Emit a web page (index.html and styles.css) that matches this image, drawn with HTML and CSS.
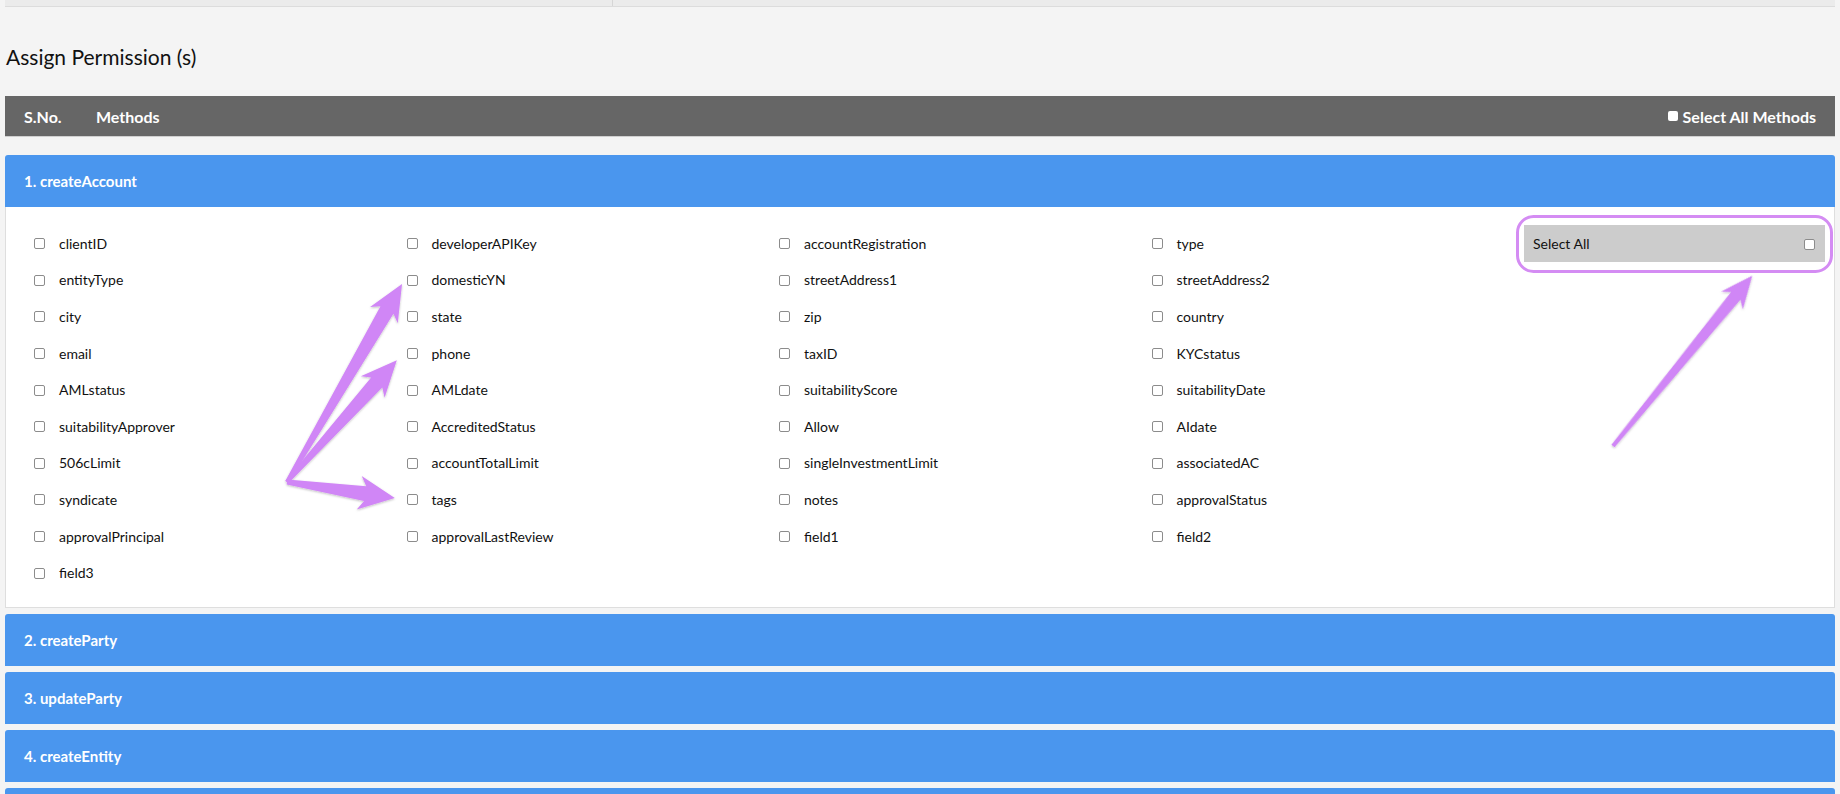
FILE: index.html
```html
<!DOCTYPE html>
<html lang="en">
<head>
    <meta charset="UTF-8">
    <title>Assign Permission (s)</title>
    <link rel="stylesheet" href="styles.css">
</head>
<body>
    <div class="page">
        <div class="top-strip">
            <div class="strip-cell first"></div>
            <div class="strip-cell"></div>
        </div>

        <h2 class="title">Assign Permission (s)</h2>

        <div class="methods-head">
            <span class="sno">S.No.</span>
            <span class="mname">Methods</span>
            <label class="all-methods"><input type="checkbox" class="sq"> Select All Methods</label>
        </div>

        <div class="method">
            <div class="method-bar">1. createAccount</div>
            <div class="method-body">
                <div class="fields">
                    <label class="field"><input type="checkbox">clientID</label>
                    <label class="field"><input type="checkbox">developerAPIKey</label>
                    <label class="field"><input type="checkbox">accountRegistration</label>
                    <label class="field"><input type="checkbox">type</label>
                    <label class="field"><input type="checkbox">entityType</label>
                    <label class="field"><input type="checkbox">domesticYN</label>
                    <label class="field"><input type="checkbox">streetAddress1</label>
                    <label class="field"><input type="checkbox">streetAddress2</label>
                    <label class="field"><input type="checkbox">city</label>
                    <label class="field"><input type="checkbox">state</label>
                    <label class="field"><input type="checkbox">zip</label>
                    <label class="field"><input type="checkbox">country</label>
                    <label class="field"><input type="checkbox">email</label>
                    <label class="field"><input type="checkbox">phone</label>
                    <label class="field"><input type="checkbox">taxID</label>
                    <label class="field"><input type="checkbox">KYCstatus</label>
                    <label class="field"><input type="checkbox">AMLstatus</label>
                    <label class="field"><input type="checkbox">AMLdate</label>
                    <label class="field"><input type="checkbox">suitabilityScore</label>
                    <label class="field"><input type="checkbox">suitabilityDate</label>
                    <label class="field"><input type="checkbox">suitabilityApprover</label>
                    <label class="field"><input type="checkbox">AccreditedStatus</label>
                    <label class="field"><input type="checkbox">Allow</label>
                    <label class="field"><input type="checkbox">AIdate</label>
                    <label class="field"><input type="checkbox">506cLimit</label>
                    <label class="field"><input type="checkbox">accountTotalLimit</label>
                    <label class="field"><input type="checkbox">singleInvestmentLimit</label>
                    <label class="field"><input type="checkbox">associatedAC</label>
                    <label class="field"><input type="checkbox">syndicate</label>
                    <label class="field"><input type="checkbox">tags</label>
                    <label class="field"><input type="checkbox">notes</label>
                    <label class="field"><input type="checkbox">approvalStatus</label>
                    <label class="field"><input type="checkbox">approvalPrincipal</label>
                    <label class="field"><input type="checkbox">approvalLastReview</label>
                    <label class="field"><input type="checkbox">field1</label>
                    <label class="field"><input type="checkbox">field2</label>
                    <label class="field"><input type="checkbox">field3</label>
                </div>
                <label class="select-all">Select All <input type="checkbox"></label>
            </div>
        </div>

        <div class="method"><div class="method-bar">2. createParty</div></div>
        <div class="method"><div class="method-bar">3. updateParty</div></div>
        <div class="method"><div class="method-bar">4. createEntity</div></div>
        <div class="method"><div class="method-bar"></div></div>
    </div>

    <!-- annotation layer -->
    <svg class="notes" width="1840" height="794" viewBox="0 0 1840 794">
        <defs>
            <filter id="shadow" x="-20%" y="-20%" width="140%" height="140%">
                <feDropShadow dx="0" dy="1" stdDeviation="1.2" flood-color="#000" flood-opacity="0.25"/>
            </filter>
        </defs>
        <rect x="1517.5" y="216.5" width="314" height="55" rx="16" class="ring"/>
        <g class="arrow" filter="url(#shadow)">
            <polygon transform="translate(287,482) rotate(-59.85)" points="0,-2 199,-7.5 193,-16 229,0 193,16 199,7.5 0,2"/>
            <polygon transform="translate(287,482) rotate(-47.96)" points="0,-2 134,-7.5 128,-16 164,0 128,16 134,7.5 0,2"/>
            <polygon transform="translate(287,482) rotate(8.43)" points="0,-2.5 79,-7.5 73,-17 109,0 73,17 79,7.5 0,2.5"/>
            <polygon transform="translate(1613,446) rotate(-50.73)" points="0,-2 194,-6 188,-14 220,0 188,14 194,6 0,2"/>
        </g>
    </svg>
</body>
</html>
```

FILE: styles.css
```css
body { margin: 0; background: #f4f4f4; font-family: 'Lato', sans-serif; color: #222; }
.page { padding: 0 5px; }

.top-strip { display: flex; height: 6px; background: #ebebeb; border-bottom: 1px solid #dcdcdc; }
.strip-cell { flex: 1; }
.strip-cell.first { flex: 0 0 607px; border-right: 1px solid #d6d6d6; }

.title { margin: 38px 0 27px 1px; font-size: 21px; line-height: 24px; font-weight: normal; color: #111; }

.methods-head { display: flex; align-items: center; height: 40px; padding: 0 19px; background: #666666; border-bottom: 1px solid #cfcfcf; color: #fff; font-weight: bold; font-size: 16px; }
.sno { width: 72px; }
.all-methods { margin-left: auto; display: flex; align-items: center; }
.all-methods .sq { appearance: none; width: 10px; height: 10px; margin: 0 5px 0 0; background: #fff; border: none; }

.method { margin-top: 6px; }
.methods-head + .method { margin-top: 18px; }
.method-bar { height: 52px; line-height: 52px; padding-left: 19px; background: #4a96ee; color: #fff; font-weight: bold; font-size: 15px; border-radius: 3px 3px 0 0; }

.method-body { display: grid; grid-template-columns: 1fr 301px; padding: 18px 9px 16px 28px; background: #fff; border: 1px solid #dedede; border-top: none; }
.fields { display: grid; grid-template-columns: repeat(4, 1fr); grid-auto-rows: 36.6px; }
.field { display: flex; align-items: center; font-size: 14px; color: #111; }

input[type=checkbox] { appearance: none; width: 11px; height: 11px; margin: 1px 14px 0 0; background: #fff; border: 1px solid #8c8c8c; border-radius: 2px; }

.select-all { display: flex; align-items: center; justify-content: space-between; height: 37px; padding: 0 10px 0 9px; background: #cccccc; font-size: 14px; color: #111; }
.select-all input { margin: 2px 0 0 0; }

.notes { position: absolute; top: 0; left: 0; pointer-events: none; }
.ring { fill: none; stroke: #d48cf3; stroke-width: 3; }
.arrow polygon { fill: #d086f6; }
```
